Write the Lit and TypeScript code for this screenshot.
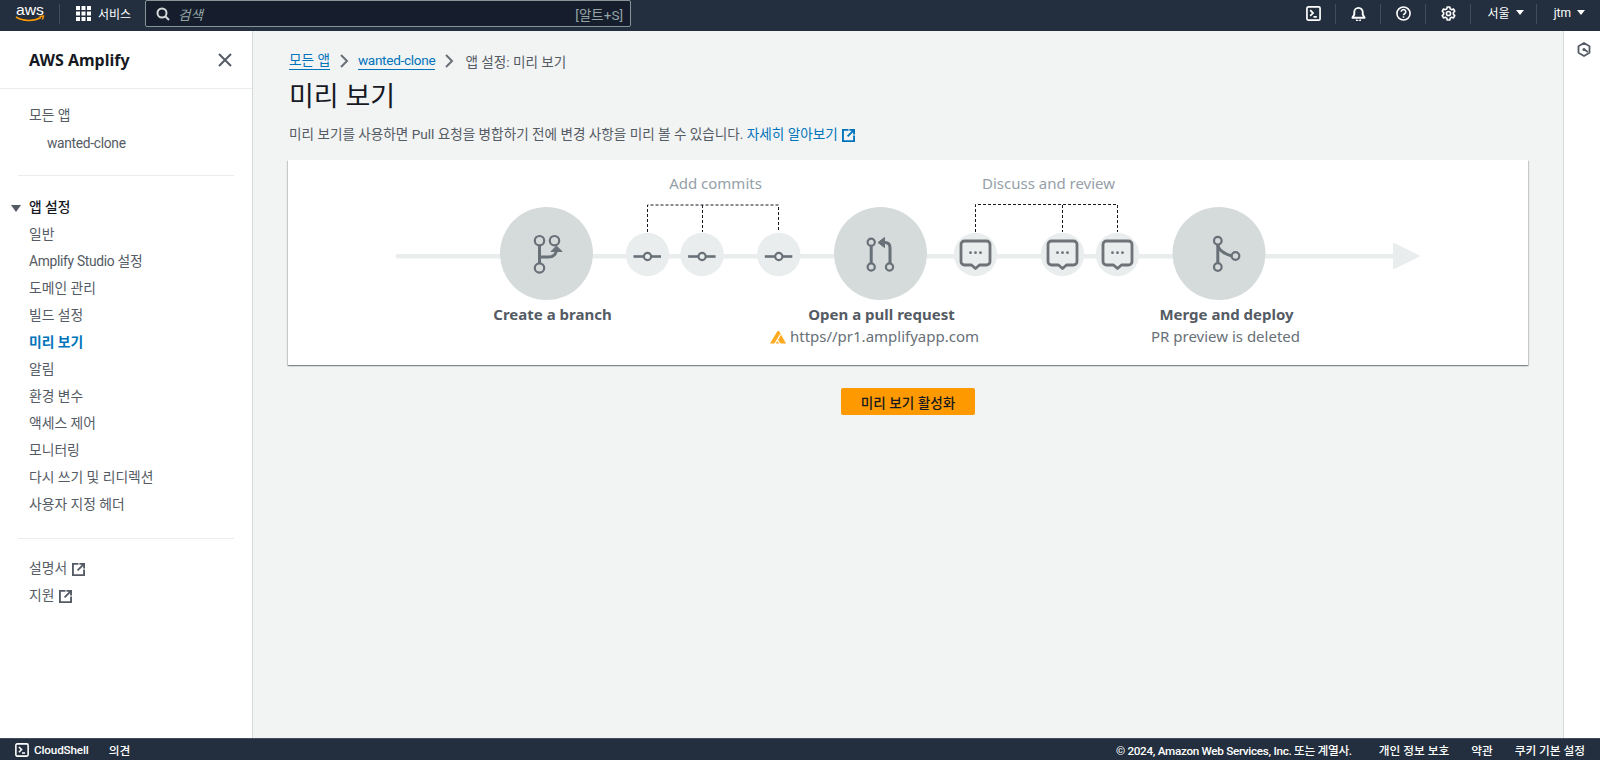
import { LitElement, html, css, svg } from 'lit';
import { customElement } from 'lit/decorators.js';

const externalIcon = html`
  <svg class="ext" viewBox="1 1 14 14" fill="none" stroke="currentColor" stroke-width="2">
    <path d="M8 2H2v12h12V8" />
    <path d="M9 2h5v5M14 2L7 9" />
  </svg>
`;

const terminalIcon = html`
  <svg viewBox="0 0 16 16" fill="none" stroke="currentColor" stroke-width="1.8">
    <rect x="1" y="1" width="14" height="14" rx="1.5" />
    <path d="M4.5 4.5L7.5 7.5L4.5 10.5M8 11.5h3.5" />
  </svg>
`;

const bellIcon = html`
  <svg viewBox="0 0 16 16" fill="none" stroke="currentColor" stroke-width="2">
    <path d="M1.5 12.5h13L12.5 9V6.5a4.5 4.5 0 0 0-9 0V9z" stroke-linejoin="round" />
    <path d="M6 14.5a2 2 0 0 0 4 0" stroke-width="1.6" />
  </svg>
`;

const helpIcon = html`
  <svg viewBox="0 0 16 16" fill="none" stroke="currentColor" stroke-width="1.7">
    <circle cx="8" cy="8" r="7" />
    <path d="M5.6 6.2a2.4 2.4 0 1 1 3.6 2.1c-.8.4-1.2.9-1.2 1.7" />
    <path d="M8 11v1.5" />
  </svg>
`;

const gearIcon = html`
  <svg viewBox="0 0 16 16" fill="none" stroke="currentColor" stroke-width="1.7">
    <path d="M6.6 1h2.8l.4 2 1.5.9 2-.7 1.4 2.4-1.5 1.4v1.9l1.5 1.4-1.4 2.4-2-.7-1.5.9-.4 2H6.6l-.4-2-1.5-.9-2 .7-1.4-2.4 1.5-1.4V7L1.3 5.6l1.4-2.4 2 .7 1.5-.9z" stroke-linejoin="round" />
    <circle cx="8" cy="8" r="2.2" />
  </svg>
`;

const hexIcon = html`
  <svg viewBox="0 0 14 15" fill="none" stroke="#545b64" stroke-width="1.8">
    <path d="M7 1l5.5 3.2v6.6L7 14l-5.5-3.2V4.2z" stroke-linejoin="round" />
    <circle cx="7" cy="7.5" r="1.6" fill="#545b64" stroke="none" />
    <path d="M7 7.5l4 2.5" />
  </svg>
`;

const commit = (cx: number) => svg`
  <circle cx=${cx} cy="254.5" r="21.7" fill="#eaeded" />
  <path d="M${cx - 14} 256.5h27.5" stroke="#687078" stroke-width="2.6" />
  <circle cx=${cx} cy="256.5" r="3.6" fill="#eaeded" stroke="#687078" stroke-width="2.2" />
`;

const comment = (cx: number) => svg`
  <circle cx=${cx} cy="254.5" r="21.7" fill="#eaeded" />
  <path
    d="M${cx - 11} 241h22a3.5 3.5 0 0 1 3.5 3.5v17a3.5 3.5 0 0 1-3.5 3.500h-7l-4 3.5-4-3.500h-7a3.5 3.5 0 0 1-3.5-3.500v-17a3.5 3.5 0 0 1 3.5-3.5z"
    fill="none" stroke="#6f7378" stroke-width="2.8" stroke-linejoin="round" />
  <circle cx=${cx - 5} cy="252.7" r="1.4" fill="#6f7378" />
  <circle cx=${cx} cy="252.7" r="1.4" fill="#6f7378" />
  <circle cx=${cx + 5} cy="252.7" r="1.4" fill="#6f7378" />
`;

@customElement('app-root')
export class AppRoot extends LitElement {
  static styles = css`
    :host {
      display: flex;
      flex-direction: column;
      height: 760px;
      overflow: hidden;
      font-family: Roboto, "Noto Sans CJK KR", sans-serif;
      font-size: 14px;
      color: #16191f;
    }

    a {
      color: inherit;
      text-decoration: none;
    }

    .tight {
      letter-spacing: -0.3px;
    }

    .topnav {
      height: 31px;
      flex: none;
      display: flex;
      align-items: flex-start;
      background: #232f3e;
      color: #fff;
      font-size: 12px;
    }

    .logo {
      width: 30px;
      height: 26px;
      margin: 0 14px 0 15px;
    }

    .vline {
      width: 1px;
      height: 20px;
      margin-top: 4px;
      background: #414d5c;
      flex: none;
    }

    .services {
      display: flex;
      align-items: center;
      gap: 7px;
      height: 27px;
      margin-left: 16px;
      width: 69px;
    }

    .grid-icon {
      width: 15px;
      height: 15px;
    }

    .search {
      width: 486px;
      height: 27px;
      box-sizing: border-box;
      display: flex;
      align-items: center;
      padding: 0 7px 0 10px;
      background: #161e2d;
      border: 1px solid #879596;
      border-radius: 2px;
      color: #95a5a6;
      font-size: 13.5px;
    }

    .search svg {
      width: 14px;
      height: 14px;
      margin-right: 8px;
      color: #d5dbdb;
    }

    .search em {
      flex: 1;
    }

    .nav-right {
      margin-left: auto;
      display: flex;
      align-items: flex-start;
    }

    .nav-icon {
      width: 14px;
      height: 14px;
      padding: 6px 15px 0;
      display: block;
    }

    .nav-icon svg {
      width: 15px;
      height: 15px;
      display: block;
    }

    .nav-menu {
      display: flex;
      align-items: center;
      gap: 6px;
      height: 25px;
      padding: 0 12px 0 17px;
      font-size: 12px;
    }

    .nav-menu:last-child {
      padding-right: 15px;
    }

    .caret {
      width: 0;
      height: 0;
      border-left: 4px solid transparent;
      border-right: 4px solid transparent;
      border-top: 5px solid currentColor;
    }

    .body {
      flex: 1;
      display: flex;
      min-height: 0;
    }

    .sidebar {
      width: 252px;
      flex: none;
      background: #fff;
      border-right: 1px solid #d5dbdb;
      color: #545b64;
    }

    .side-head {
      height: 58px;
      box-sizing: border-box;
      padding-left: 29px;
      padding-right: 20px;
      display: flex;
      align-items: center;
      justify-content: space-between;
      border-bottom: 1px solid #eaeded;
      font-family: "Noto Sans", "Noto Sans CJK KR", sans-serif;
      font-size: 16px;
      font-weight: 700;
      color: #16191f;
    }

    .side-head svg {
      width: 14px;
      height: 14px;
    }

    .side-list {
      padding: 13px 0 0 29px;
      line-height: 27px;
      font-size: 13.8px;
    }

    .side-list div {
      height: 27px;
    }

    .side-list .sub {
      padding-left: 18px;
      padding-top: 1px;
      box-sizing: border-box;
    }

    .side-list .group {
      position: relative;
      color: #16191f;
      font-weight: 500;
    }

    .group::before {
      content: "";
      position: absolute;
      left: -18px;
      top: 11px;
      border-left: 5px solid transparent;
      border-right: 5px solid transparent;
      border-top: 7px solid #545b64;
    }

    .side-list .active {
      color: #0073bb;
      font-weight: 700;
    }

    .rule {
      height: 1px;
      margin: 19px 18px 18px 18px;
      background: #eaeded;
    }

    .rule.last {
      margin: 20px 18px 16px 18px;
    }

    .side-list.plain {
      padding-top: 0;
    }

    .ext {
      width: 13px;
      height: 13px;
      margin-left: 1px;
      vertical-align: -3px;
    }

    .main {
      flex: 1;
      min-width: 0;
      background: #f2f3f3;
      padding: 19px 35px 0 35px;
    }

    .crumbs {
      display: flex;
      align-items: center;
      height: 22px;
      margin-left: 1px;
      font-size: 13.6px;
      color: #545b64;
    }

    .crumbs a {
      color: #0073bb;
      border-bottom: 1px solid #0073bb;
      line-height: 17px;
    }

    .crumbs svg {
      width: 10px;
      height: 14px;
      margin: 0 9px;
    }

    .crumbs span {
      margin-left: 2px;
    }

    h1 {
      margin: 5px 0 0 1px;
      font-size: 27px;
      font-weight: 400;
      line-height: 40px;
    }

    .desc {
      margin: 6px 0 0 1px;
      font-size: 13.6px;
      line-height: 22px;
      color: #545b64;
    }

    .desc a {
      color: #0073bb;
    }

    .desc .ext {
      color: #0073bb;
    }

    .card {
      height: 205px;
      margin-top: 15px;
      background: #fff;
      box-shadow: 0 1px 1px 0 rgba(0, 28, 36, 0.3), 1px 1px 1px 0 rgba(0, 28, 36, 0.15), -1px 1px 1px 0 rgba(0, 28, 36, 0.15);
    }

    .card svg {
      display: block;
      width: 100%;
      height: 100%;
    }

    .card text {
      font-family: "Noto Sans", "Noto Sans CJK KR", sans-serif;
      text-anchor: middle;
    }

    .step-title {
      font-size: 15px;
      font-weight: 700;
      fill: #545b64;
    }

    .step-note {
      font-size: 15px;
      fill: #687078;
    }

    .bracket-label {
      font-size: 15px;
      fill: #95a0a8;
    }

    .dash {
      fill: none;
      stroke: #16191f;
      stroke-dasharray: 3 2;
    }

    .icon-line {
      fill: none;
      stroke: #687078;
      stroke-width: 3;
    }

    .icon-ring {
      fill: none;
      stroke: #687078;
      stroke-width: 2.2;
    }

    .actions {
      display: flex;
      justify-content: center;
      margin-top: 23px;
    }

    button {
      width: 134px;
      height: 27px;
      border: 0;
      border-radius: 2px;
      background: #ff9900;
      color: #16191f;
      font: 500 13.6px Roboto, "Noto Sans CJK KR", sans-serif;
    }

    .rail {
      width: 37px;
      flex: none;
      background: #fff;
      border-left: 1px solid #d5dbdb;
      box-sizing: border-box;
      padding: 11px 0 0 13px;
    }

    .rail svg {
      width: 14px;
      height: 15px;
      display: block;
    }

    .footer {
      height: 22px;
      flex: none;
      display: flex;
      align-items: center;
      background: #232f3e;
      color: #fff;
      font-size: 11.7px;
      font-weight: 500;
      border-top: 1px solid #414d5c;
      box-sizing: border-box;
      padding-left: 15px;
    }

    .footer .cloud {
      display: flex;
      align-items: center;
      gap: 5px;
      margin-right: 20px;
    }

    .footer .tight {
      letter-spacing: -0.15px;
    }

    .footer svg {
      width: 14px;
      height: 14px;
    }

    .footer .legal {
      margin-left: auto;
      display: flex;
      gap: 22px;
      padding-right: 15px;
    }

    .footer .copy {
      margin-right: 5px;
      font-size: 11.7px;
      letter-spacing: -0.3px;
    }
  `;

  renderDiagram() {
    return html`
      <svg viewBox="288 160 1239 205">
        <rect x="395" y="254" width="1000" height="4.6" rx="2.3" fill="#eaeded" />
        <path d="M1393 243l26 13-26 13z" fill="#eaeded" stroke="#eaeded" stroke-linejoin="round" />

        <path class="dash" d="M647 232V205H778V232M702 205V232" />
        <path class="dash" d="M975 232V204.500H1117V232M1062 205V232" />
        <text class="bracket-label" x="715" y="189">Add commits</text>
        <text class="bracket-label" x="1048" y="189">Discuss and review</text>

        <circle cx="546" cy="253.500" r="46.500" fill="#d5dbdb" />
        <circle cx="880" cy="253.500" r="46.500" fill="#d5dbdb" />
        <circle cx="1218.500" cy="253.500" r="46.500" fill="#d5dbdb" />

        ${commit(647)} ${commit(701.6)} ${commit(778.3)}
        ${comment(975)} ${comment(1062)} ${comment(1117)}

        <!-- branch -->
        <path class="icon-line" d="M539 245V263M539 257h9c5 0 8-3 8-8" />
        <path d="M550.500 251.500l5.500-5.500 5.500 5.500z" fill="#687078" stroke="#687078" />
        <circle class="icon-ring" cx="539" cy="240.700" r="4.700" />
        <circle class="icon-ring" cx="554" cy="240.700" r="4.700" />
        <circle class="icon-ring" cx="539" cy="268" r="4.700" />

        <!-- pull request -->
        <path class="icon-line" d="M870.700 246V263" />
        <path class="icon-line" d="M882 242.500h2.500c3.500 0 5 2.500 5 5.500V263" />
        <path d="M884 237.500v10l-6.500-5z" fill="#687078" stroke="#687078" />
        <circle class="icon-ring" cx="870.700" cy="242.300" r="3.600" />
        <circle class="icon-ring" cx="870.700" cy="267" r="3.600" />
        <circle class="icon-ring" cx="889" cy="267" r="3.600" />

        <!-- merge -->
        <path class="icon-line" d="M1217.300 244V263" />
        <path class="icon-line" d="M1217.300 245c1 6 7 9 14 11" />
        <circle class="icon-ring" cx="1217.300" cy="240.700" r="3.800" />
        <circle class="icon-ring" cx="1217.300" cy="267" r="3.800" />
        <circle class="icon-ring" cx="1235" cy="256" r="3.800" />

        <text class="step-title" x="552" y="320">Create a branch</text>
        <text class="step-title" x="881" y="320">Open a pull request</text>
        <text class="step-title" x="1226" y="320">Merge and deploy</text>
        <text class="step-note" x="1225" y="342">PR preview is deleted</text>

        <!-- amplify mark -->
        <path d="M769.500 343.500L777 331h1.500L785.500 343.500z" fill="#ffa91f" />
        <path d="M774 344.500L780 334.500M780 344.500L777 340" fill="none" stroke="#fff" stroke-width="1.300" />
        <text class="step-note" x="884" y="342">https//pr1.amplifyapp.com</text>
      </svg>
    `;
  }

  render() {
    const items = ['일반', 'Amplify Studio 설정', '도메인 관리', '빌드 설정'];
    const after = ['알림', '환경 변수', '액세스 제어', '모니터링', '다시 쓰기 및 리디렉션', '사용자 지정 헤더'];

    return html`
      <header class="topnav">
        <svg class="logo" viewBox="0 0 30 26">
          <text x="1" y="15" fill="#fff" font-size="15" font-family="Liberation Sans, sans-serif" textLength="28" lengthAdjust="spacingAndGlyphs">aws</text>
          <path d="M1 17c7 4.500 18 4.500 25 .5" fill="none" stroke="#ff9900" stroke-width="1.600" />
          <path d="M24.500 16.500l4-.5-1 3.500" fill="none" stroke="#ff9900" stroke-width="1.400" />
        </svg>
        <div class="vline"></div>
        <div class="services">
          <svg class="grid-icon" viewBox="0 0 15 15" fill="#fff">
            <rect width="4" height="4" /><rect x="5.500" width="4" height="4" /><rect x="11" width="4" height="4" />
            <rect y="5.500" width="4" height="4" /><rect x="5.500" y="5.500" width="4" height="4" /><rect x="11" y="5.500" width="4" height="4" />
            <rect y="11" width="4" height="4" /><rect x="5.500" y="11" width="4" height="4" /><rect x="11" y="11" width="4" height="4" />
          </svg>
          <span>서비스</span>
        </div>
        <div class="search">
          <svg viewBox="0 0 14 14" fill="none" stroke="currentColor" stroke-width="2">
            <circle cx="6" cy="6" r="4.500" /><path d="M9.500 9.500L13 13" />
          </svg>
          <em>검색</em>
          <span>[알트+S]</span>
        </div>
        <div class="nav-right">
          <span class="nav-icon">${terminalIcon}</span>
          <div class="vline"></div>
          <span class="nav-icon">${bellIcon}</span>
          <div class="vline"></div>
          <span class="nav-icon">${helpIcon}</span>
          <div class="vline"></div>
          <span class="nav-icon">${gearIcon}</span>
          <div class="vline"></div>
          <div class="nav-menu"><span>서울</span><i class="caret"></i></div>
          <div class="vline"></div>
          <div class="nav-menu"><span>jtm</span><i class="caret"></i></div>
        </div>
      </header>

      <div class="body">
        <aside class="sidebar">
          <div class="side-head">
            <span>AWS Amplify</span>
            <svg viewBox="0 0 14 14" fill="none" stroke="#545b64" stroke-width="2"><path d="M1 1l12 12M13 1L1 13" /></svg>
          </div>
          <div class="side-list">
            <div>모든 앱</div>
            <div class="sub tight">wanted-clone</div>
          </div>
          <div class="rule"></div>
          <div class="side-list plain">
            <div class="group">앱 설정</div>
            ${items.map((item) => html`<div class=${item.startsWith('Amplify') ? 'tight' : ''}>${item}</div>`)}
            <div class="active">미리 보기</div>
            ${after.map((item) => html`<div>${item}</div>`)}
          </div>
          <div class="rule last"></div>
          <div class="side-list plain">
            <div>설명서${externalIcon}</div>
            <div>지원${externalIcon}</div>
          </div>
        </aside>

        <main class="main">
          <nav class="crumbs">
            <a href="#">모든 앱</a>
            <svg viewBox="0 0 10 14" fill="none" stroke="#687078" stroke-width="2"><path d="M2 1l6 6-6 6" /></svg>
            <a class="tight" href="#">wanted-clone</a>
            <svg viewBox="0 0 10 14" fill="none" stroke="#687078" stroke-width="2"><path d="M2 1l6 6-6 6" /></svg>
            <span>앱 설정: 미리 보기</span>
          </nav>
          <h1>미리 보기</h1>
          <p class="desc">
            미리 보기를 사용하면 Pull 요청을 병합하기 전에 변경 사항을 미리 볼 수 있습니다.
            <a href="#">자세히 알아보기${externalIcon}</a>
          </p>
          <section class="card">${this.renderDiagram()}</section>
          <div class="actions"><button>미리 보기 활성화</button></div>
        </main>

        <aside class="rail">${hexIcon}</aside>
      </div>

      <footer class="footer">
        <div class="cloud">${terminalIcon}<span class="tight">CloudShell</span></div>
        <span>의견</span>
        <div class="legal">
          <span class="copy">© 2024, Amazon Web Services, Inc. 또는 계열사.</span>
          <span>개인 정보 보호</span>
          <span>약관</span>
          <span>쿠키 기본 설정</span>
        </div>
      </footer>
    `;
  }
}
